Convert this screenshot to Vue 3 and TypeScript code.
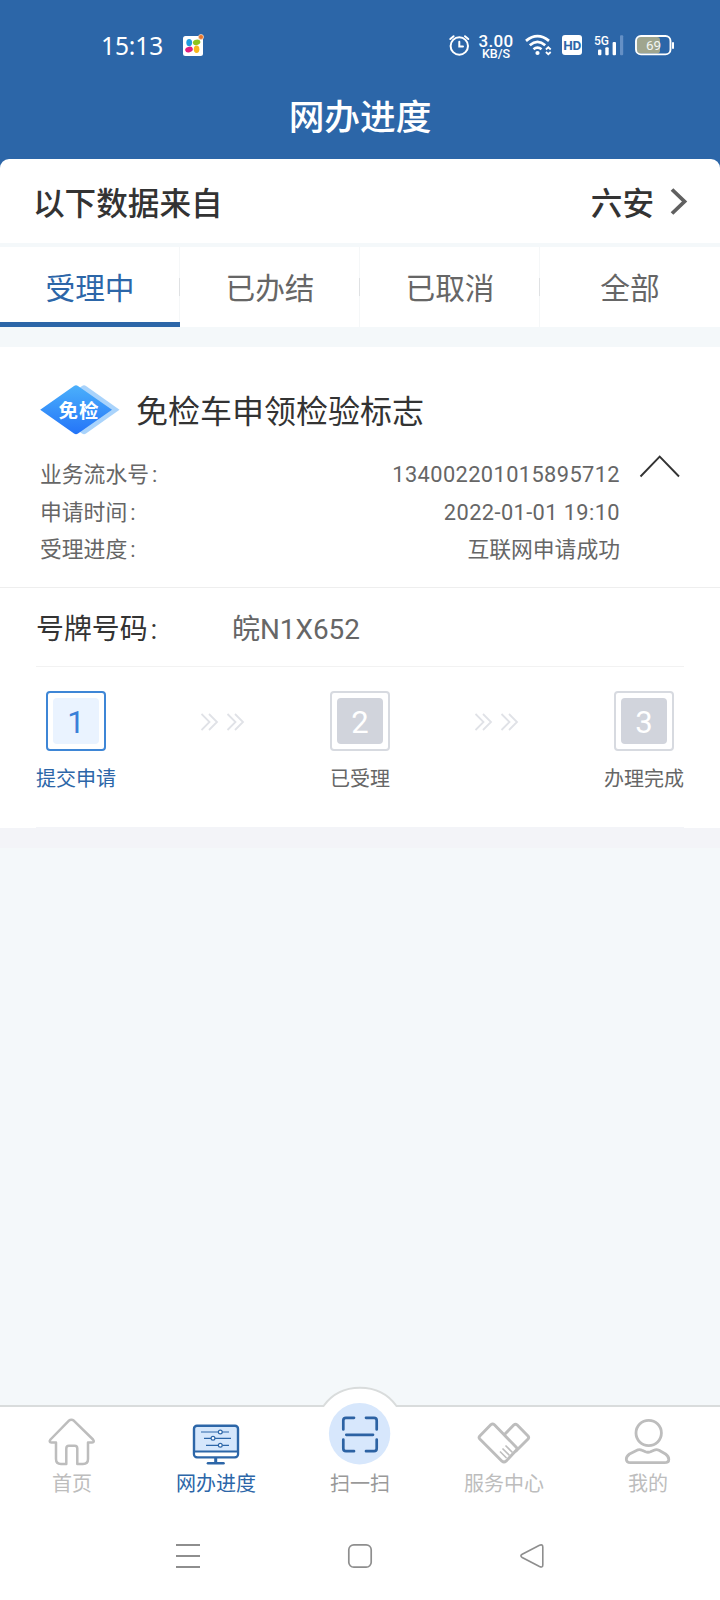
<script setup lang="ts">
interface Field {
  label: string
  value: string
  numeric: boolean
}

interface Step {
  no: number
  label: string
  active: boolean
}

const tabs: string[] = ['受理中', '已办结', '已取消', '全部']
const activeTab = 0

const fields: Field[] = [
  { label: '业务流水号', value: '134002201015895712', numeric: true },
  { label: '申请时间', value: '2022-01-01 19:10', numeric: true },
  { label: '受理进度', value: '互联网申请成功', numeric: false },
]

const steps: Step[] = [
  { no: 1, label: '提交申请', active: true },
  { no: 2, label: '已受理', active: false },
  { no: 3, label: '办理完成', active: false },
]
</script>

<template>
  <div class="screen">
    <header class="top">
      <div class="status">
        <span class="clock">15:13</span>
        <svg class="app-badge" viewBox="182 33 23 24" width="23" height="24">
          <rect x="183" y="36" width="20" height="20" rx="2.5" fill="#fff" />
          <ellipse cx="189.200" cy="42.600" rx="2.900" ry="3.600" fill="#1f9be0" />
          <ellipse cx="196.600" cy="42.300" rx="3.800" ry="2.700" fill="#8cc51f" transform="rotate(-15 196.6 42.3)" />
          <ellipse cx="189" cy="49.600" rx="3.900" ry="2.800" fill="#e01f7d" transform="rotate(-15 189 49.6)" />
          <ellipse cx="196.600" cy="49.200" rx="2.800" ry="3.700" fill="#f8b81c" />
          <circle cx="201" cy="37" r="2.500" fill="#e8762a" stroke="#f6d9c4" stroke-width=".8" />
        </svg>
        <div class="status-right">
          <svg class="alarm" viewBox="448 34 23 24" width="23" height="24" fill="none" stroke="#fff" stroke-linecap="round">
            <circle cx="459.300" cy="47" r="8.700" stroke-width="2" />
            <path d="M459.300 42.800V47.500H463" stroke-width="2" />
            <path d="M450.300 40L453.600 37.200M465 37.200L468.300 40" stroke-width="2" />
          </svg>
          <div class="speed">
            <span class="speed-num">3.00</span>
            <span class="speed-unit">KB/S</span>
          </div>
          <svg class="wifi" viewBox="524 33 29 24" width="29" height="24" fill="none" stroke="#fff">
            <path d="M526 40.800Q537.500 31.500 549 40.800" stroke-width="2.800" />
            <path d="M529.800 45.200Q537.500 38.600 545.200 45.200" stroke-width="2.800" />
            <path d="M533.500 49.300Q537.500 45.800 541.500 49.300" stroke-width="2.600" />
            <circle cx="537.500" cy="53" r="2.100" fill="#fff" stroke="none" />
            <path d="M545.900 49.500L548.300 47.300L550.700 49.500M545.900 52L548.300 54.200L550.700 52" stroke-width="1.800" />
          </svg>
          <span class="hd">HD</span>
          <svg class="signal" viewBox="593 33 32 24" width="32" height="24">
            <text x="594" y="45" class="sig-text" fill="#fff">5G</text>
            <rect x="598" y="49.500" width="3.400" height="5.700" rx="1" fill="#fff" />
            <rect x="605.300" y="47.200" width="3.400" height="8" rx="1" fill="#fff" />
            <rect x="612.600" y="42" width="3.400" height="13.200" rx="1" fill="#fff" />
            <rect x="620" y="35.200" width="3.200" height="20" rx="1" fill="#6590c5" />
          </svg>
          <svg class="battery" viewBox="634 34 41 22" width="41" height="22">
            <rect x="637" y="37" width="23" height="16.500" rx="3" fill="#9fa58e" />
            <rect x="636" y="36" width="34.500" height="18.400" rx="5" fill="none" stroke="#fff" stroke-width="1.900" />
            <rect x="672" y="42" width="2" height="7" rx="1" fill="#fff" />
            <text x="653.500" y="50.200" class="bat-text" fill="#f2f5f2" text-anchor="middle">69</text>
          </svg>
        </div>
      </div>
      <h1 class="title">网办进度</h1>
    </header>

    <div class="source-wrap">
      <section class="source">
        <span>以下数据来自</span>
        <span class="city">六安
          <svg class="chev" viewBox="670 185 20 30" width="20" height="30">
            <path d="M673 188.500L685.500 200.500L673 212.500" fill="none" stroke="#606060" stroke-width="3.800" />
          </svg>
        </span>
      </section>
    </div>

    <nav class="tabs">
      <div v-for="(t, i) in tabs" :key="t" class="tab" :class="{ on: i === activeTab }">{{ t }}</div>
    </nav>

    <article class="card">
      <div class="summary">
        <div class="heading">
          <svg class="tag" viewBox="40 384 80 52" width="80" height="52">
            <defs>
              <linearGradient id="tagFill" x1="0" y1="0" x2="0" y2="1">
                <stop offset="0" stop-color="#4bb0fb" />
                <stop offset="1" stop-color="#2474f8" />
              </linearGradient>
            </defs>
            <path d="M48.500 409.700L82 386Q84 384.600 86 386L119.500 409.700L86 433.500Q84 434.900 82 433.500Z" fill="#a9d3fb" />
            <path d="M40.200 409.700L74 386Q76 384.600 78 386L112 409.700L78 433.500Q76 434.900 74 433.500Z" fill="url(#tagFill)" />
            <text x="58.500" y="418" class="tag-text" fill="#fff">免检</text>
          </svg>
          <h2>免检车申领检验标志</h2>
        </div>
        <div class="detail">
          <dl>
            <div v-for="f in fields" :key="f.label" class="row">
              <dt>{{ f.label }}<i class="colon">:</i></dt>
              <dd :class="{ numeric: f.numeric }">{{ f.value }}</dd>
            </div>
          </dl>
          <svg class="fold" viewBox="638 454 44 26" width="44" height="26">
            <path d="M640.500 476.500L659.700 456.500L679 476.500" fill="none" stroke="#333" stroke-width="1.900" />
          </svg>
        </div>
      </div>

      <div class="plate">
        <span class="plate-label">号牌号码<i class="colon">:</i></span>
        <span class="plate-no">皖N1X652</span>
      </div>

      <div class="steps">
        <template v-for="(s, i) in steps" :key="s.no">
          <svg v-if="i > 0" class="arrows" viewBox="0 0 44 18" width="44" height="18" fill="none" stroke="#e0e2e7" stroke-width="1.800">
            <path d="M0.500 1L8.500 9L0.500 17M8 1L16 9L8 17M26.500 1L34.500 9L26.500 17M34 1L42 9L34 17" />
          </svg>
          <div class="step" :class="{ active: s.active }">
            <div class="box"><div class="num">{{ s.no }}</div></div>
            <span>{{ s.label }}</span>
          </div>
        </template>
      </div>
    </article>
    <div class="band"></div>

    <main class="blank"></main>

    <footer class="bottom">
      <svg class="arch" viewBox="318 1384 84 26" width="84" height="26">
        <path d="M318 1406H323.500C332 1394 345 1387.700 360 1387.700S388 1394 396.500 1406H402V1410H318Z" fill="#fff" />
        <path d="M318 1406H323.500C332 1394 345 1387.700 360 1387.700S388 1394 396.500 1406H402" fill="none" stroke="#d9dcdc" stroke-width="2" />
      </svg>
      <div class="item">
        <svg viewBox="46 1410 52 60" width="52" height="60" fill="none" stroke="#bdbdbd" stroke-width="2.500" stroke-linejoin="round">
          <path d="M68.700 1420.800Q71.400 1418.800 74 1420.800L93 1439.500Q95 1442.300 92 1442.600H88V1459Q88 1464 83 1464H77.300V1448.500Q77.300 1445.800 74.600 1445.800H69Q66.300 1445.800 66.300 1448.500V1464H61Q56 1464 56 1459V1442.600H51.500Q48.500 1442.300 50.500 1439.500Z" />
        </svg>
        <span>首页</span>
      </div>
      <div class="item on">
        <svg viewBox="190 1410 52 60" width="52" height="60" fill="none" stroke="#2c66a8">
          <rect x="194" y="1425.800" width="44" height="31.500" rx="3" fill="#d5e7fc" stroke-width="2.400" />
          <path d="M195.200 1452H236.800V1454Q236.800 1456.200 234.500 1456.200H197.500Q195.200 1456.200 195.200 1454Z" fill="#fff" stroke="none" />
          <path d="M194 1451.500H238" stroke-width="2.200" />
          <path d="M215.700 1458V1463" stroke-width="3" />
          <path d="M208 1463.300H223.500" stroke-width="2.600" stroke-linecap="round" />
          <g stroke-width="1.200" fill="#fff">
            <path d="M201 1432H229M204 1438.300H231M206 1445.300H229" />
            <circle cx="220.300" cy="1432" r="1.900" />
            <circle cx="213" cy="1438.300" r="1.900" />
            <circle cx="220.300" cy="1445.300" r="1.900" />
          </g>
        </svg>
        <span>网办进度</span>
      </div>
      <div class="item scan">
        <svg viewBox="328 1400 64 70" width="64" height="70" fill="none" stroke="#2c62a3" stroke-width="2.700" stroke-linecap="round">
          <circle cx="359.600" cy="1433.700" r="30.700" fill="#d7e7fc" stroke="none" />
          <path d="M343.300 1429.500V1420.500Q343.300 1417.800 346 1417.800H354M366 1417.800H374Q376.700 1417.800 376.700 1420.500V1429.500M376.700 1439.500V1448.500Q376.700 1451.200 374 1451.200H366M354 1451.200H346Q343.300 1451.200 343.300 1448.500V1439.500M346.300 1434.800H373" />
        </svg>
        <span>扫一扫</span>
      </div>
      <div class="item">
        <svg viewBox="474 1410 60 60" width="60" height="60" fill="none" stroke="#bdbdbd" stroke-width="2.900" stroke-linejoin="round">
          <path d="M491 1424.600Q492.700 1423.200 494.400 1424.800L516.500 1447.500Q517.500 1449 516 1450.500L506 1461.200Q504 1463 502 1461.200L479.800 1439Q478.400 1437.500 479.800 1436Z" />
          <path d="M504.500 1434.500L514 1424.800Q515.500 1423.500 517 1424.800L528 1436Q529.300 1437.500 528 1439L515.500 1451.500" />
          <path d="M500 1451.500L506.500 1458M502.500 1448.500L509.500 1455.500M505.500 1445.500L512.500 1452.500" stroke-width="1.600" />
        </svg>
        <span>服务中心</span>
      </div>
      <div class="item">
        <svg viewBox="622 1410 52 60" width="52" height="60" fill="none" stroke="#bdbdbd" stroke-width="2.800" stroke-linejoin="round">
          <circle cx="648.700" cy="1433" r="12.700" />
          <path d="M638 1449.800Q640 1449.200 642 1450.200L645.500 1451.800Q648 1452.700 650.500 1451.800L654 1450.200Q656.500 1449.200 659 1450.200L665.500 1454Q668.800 1456.300 668.800 1459.500Q668.800 1462.700 664.500 1462.700H630.500Q626.300 1462.700 626.300 1459Q626.300 1456.300 629.500 1454Z" />
        </svg>
        <span>我的</span>
      </div>
    </footer>

    <div class="system">
      <svg viewBox="0 0 26 26" width="26" height="26"><path d="M1 2H25M1 13H25M1 24H25" stroke="#8e8e8e" stroke-width="2" /></svg>
      <svg viewBox="0 0 26 26" width="26" height="26"><rect x="1.800" y="1.800" width="22.400" height="22.400" rx="5" fill="none" stroke="#8e8e8e" stroke-width="1.700" /></svg>
      <svg viewBox="0 0 26 26" width="26" height="26"><path d="M3.200 11.200L20.500 2.200Q23.800 1 23.800 4V22Q23.800 25 20.500 23.500L3.200 14.500Q0.600 12.800 3.200 11.200Z" fill="none" stroke="#8e8e8e" stroke-width="1.600" /></svg>
    </div>
  </div>
</template>

<style>
html,
body {
  margin: 0;
  background: #f4f8fa;
}
</style>

<style scoped>
.screen {
  width: 720px;
  height: 1600px;
  display: flex;
  flex-direction: column;
  overflow: hidden;
  background: #f4f8fa;
  font-family: Roboto, "Noto Sans CJK SC", sans-serif;
  color: #333;
}

.screen svg {
  display: block;
  flex: none;
}

.top {
  height: 159px;
  flex: none;
  background: #2c66a8;
  color: #fff;
}

.status {
  height: 90px;
  display: flex;
  align-items: center;
  padding: 0 45px 0 101px;
  box-sizing: border-box;
}

.clock {
  width: 81px;
  font: 400 24.500px/30px "Noto Sans", sans-serif;
  letter-spacing: -0.100px;
  padding-top: 2px;
}

.status-right {
  flex: 1;
  display: flex;
  align-items: center;
  justify-content: flex-end;
}

.alarm {
  margin-right: 7px;
}

.speed {
  width: 36px;
  margin-right: 10px;
  display: flex;
  flex-direction: column;
  align-items: center;
  font-family: Roboto, sans-serif;
  font-weight: 500;
  padding-top: 3px;
}

.speed-num {
  font-size: 17px;
  line-height: 14px;
  letter-spacing: 0.300px;
}

.speed-unit {
  font-size: 12.500px;
  line-height: 11px;
}

.wifi {
  margin-right: 9px;
}

.hd {
  width: 20px;
  height: 20px;
  margin-right: 11px;
  border-radius: 3px;
  background: #fff;
  color: #2c66a8;
  font: 700 13.500px/21px Roboto, sans-serif;
  text-align: center;
  letter-spacing: -0.500px;
}

.signal {
  margin-right: 9px;
}

.sig-text {
  font: 500 12px Roboto, sans-serif;
}

.bat-text {
  font: 400 13.500px Roboto, sans-serif;
}

.title {
  margin: 0;
  font-size: 35.700px;
  font-weight: 500;
  line-height: 57px;
  text-align: center;
}

.source-wrap {
  flex: none;
  background: #2c66a8;
}

.source {
  height: 84px;
  box-sizing: border-box;
  padding: 0 31px 1px 33px;
  display: flex;
  align-items: center;
  justify-content: space-between;
  background: #fff;
  border-radius: 9px 9px 0 0;
  font-size: 31.600px;
  font-weight: 500;
  color: #333;
}

.city {
  display: flex;
  align-items: center;
  gap: 15px;
}

.tabs {
  flex: none;
  margin: 4px 0 20px;
  height: 80px;
  display: flex;
  background: #fff;
}

.tab {
  flex: 1;
  box-sizing: border-box;
  border-bottom: 5px solid transparent;
  padding-top: 6px;
  line-height: 72px;
  text-align: center;
  font-size: 29.700px;
  color: #666;
  background:
    linear-gradient(#dfe1e3, #dfe1e3) 100% 31px / 1px 18px no-repeat,
    linear-gradient(#f5f7f8, #f5f7f8) 100% 0 / 1px 80px no-repeat border-box;
}

.tab:last-child {
  background: none;
}

.tab.on {
  color: #2c66a8;
  border-bottom-color: #2c66a8;
}

.card {
  flex: none;
  height: 481px;
  box-sizing: border-box;
  background: #fff;
}

.summary {
  height: 241px;
  box-sizing: border-box;
  padding: 37px 38px 0 40px;
  border-bottom: 1px solid #eee;
}

.heading {
  display: flex;
  align-items: center;
  height: 52px;
}

.tag-text {
  font: 700 19.500px "Noto Sans CJK SC", sans-serif;
  letter-spacing: 1px;
}

h2 {
  margin: 0 0 0 16px;
  padding-top: 4px;
  font-size: 32px;
  font-weight: 400;
  line-height: 52px;
}

.detail {
  display: flex;
  padding-top: 18px;
}

dl {
  width: 580px;
  margin: 0 18px 0 0;
  padding-top: 2px;
  font-size: 21.800px;
  color: #666;
}

.row {
  display: flex;
  justify-content: space-between;
  line-height: 37.500px;
  height: 37.500px;
}

dd {
  margin: 0;
}

dd.numeric {
  letter-spacing: 0.400px;
}

.colon {
  font-style: normal;
  margin-left: 3px;
}

.plate {
  height: 79px;
  box-sizing: border-box;
  margin: 0 36px;
  border-bottom: 1px solid #f2f2f2;
  display: flex;
  align-items: center;
  font-size: 27.900px;
}

.plate-label {
  width: 196px;
}

.plate-no {
  color: #666;
}

.steps {
  height: 161px;
  box-sizing: border-box;
  margin: 0 36px;
  padding-top: 24px;
  display: flex;
  align-items: flex-start;
  justify-content: space-between;
  border-bottom: 1px solid #f3f4f8;
}

.arrows {
  margin-top: 22px;
}

.step {
  display: flex;
  flex-direction: column;
  align-items: center;
  font-size: 20px;
  line-height: 30px;
  color: #666;
}

.box {
  width: 60px;
  height: 60px;
  box-sizing: border-box;
  border: 2px solid #d7dae0;
  border-radius: 4px;
  padding: 5px;
  margin-bottom: 13px;
}

.num {
  height: 46px;
  border-radius: 4px;
  background: #d1d4dc;
  color: #fff;
  font-size: 31px;
  line-height: 49px;
  text-align: center;
}

.active {
  color: #2c66a8;
}

.active .box {
  border-color: #3e86d6;
}

.active .num {
  background: #eaf3ff;
  color: #3a80d8;
}

.band {
  flex: none;
  height: 20px;
  background: #f3f4f8;
}

.blank {
  flex: 1;
}

.bottom {
  position: relative;
  flex: none;
  height: 105px;
  box-sizing: border-box;
  border-top: 2px solid #d9dcdc;
  background: #fff;
  display: flex;
}

.arch {
  position: absolute;
  left: 318px;
  top: -23px;
}

.item {
  position: relative;
  flex: 1;
  display: flex;
  flex-direction: column;
  align-items: center;
  justify-content: flex-end;
  padding-bottom: 12px;
  font-size: 20px;
  line-height: 28px;
  color: #bdbdbd;
}

.item.on {
  color: #2c66a8;
}

.item.scan {
  color: #999;
}

.system {
  flex: none;
  height: 90px;
  box-sizing: border-box;
  padding: 2px 175px 0;
  display: flex;
  align-items: center;
  justify-content: space-between;
  background: #fff;
}
</style>
